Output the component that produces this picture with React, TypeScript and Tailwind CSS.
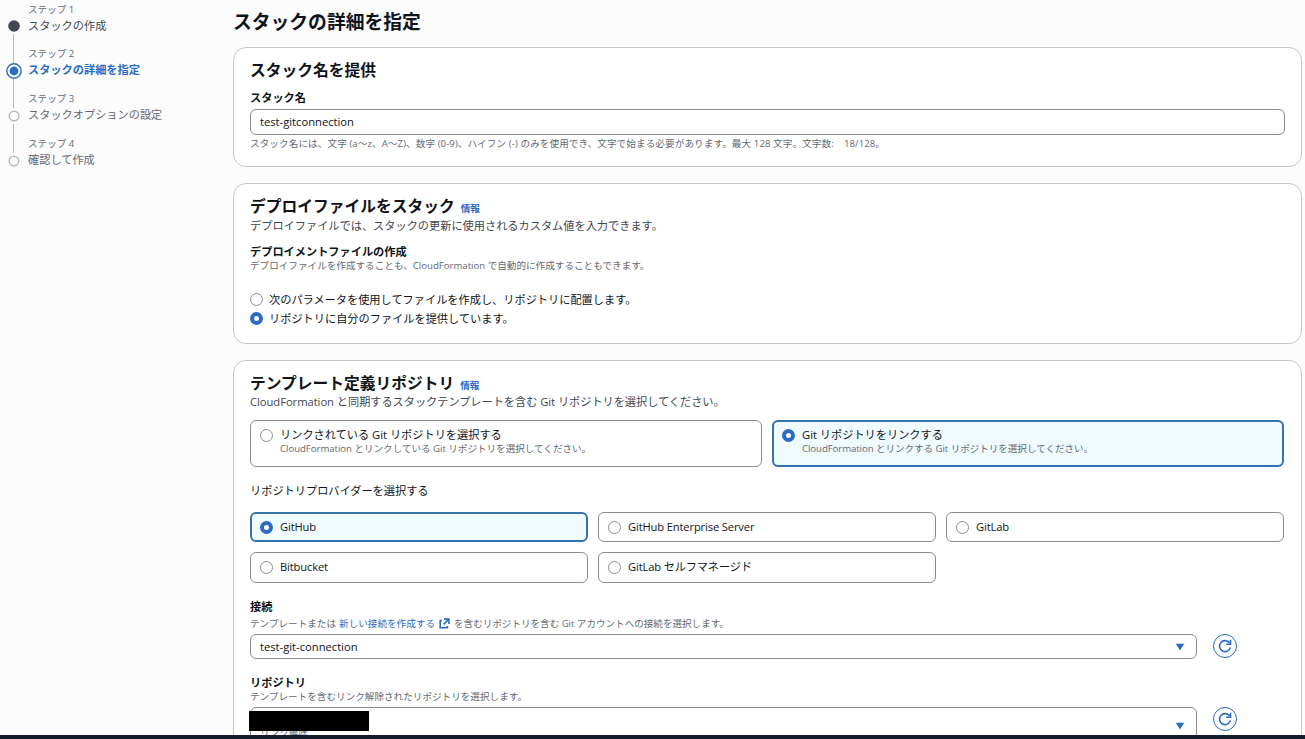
import { clsx } from 'clsx'

const STEPS = [
  { no: 'ステップ 1', title: 'スタックの作成', state: 'done' },
  { no: 'ステップ 2', title: 'スタックの詳細を指定', state: 'current' },
  { no: 'ステップ 3', title: 'スタックオプションの設定', state: 'todo' },
  { no: 'ステップ 4', title: '確認して作成', state: 'todo' },
]

const PROVIDERS = ['GitHub', 'GitHub Enterprise Server', 'GitLab', 'Bitbucket', 'GitLab セルフマネージド']

function StepMarker({ state }: { state: string }) {
  if (state === 'done') {
    return <circle cx="8" cy="8" r="5.8" fill="#424650" />
  }
  if (state === 'current') {
    return (
      <>
        <circle cx="8" cy="8" r="7.2" fill="#fff" stroke="#2a6cc4" strokeWidth="1.4" />
        <circle cx="8" cy="8" r="4.4" fill="#2a6cc4" />
      </>
    )
  }
  return <circle cx="8" cy="8" r="4.8" fill="#fff" stroke="#b6bac1" strokeWidth="1.5" />
}

function Steps() {
  return (
    <nav className="w-[233px] shrink-0 pl-1.5 pt-[3px]">
      {STEPS.map(({ no, title, state }, i) => (
        <div key={title} className="flex h-[45px] gap-1.5 first:h-[44px]">
          <div className={clsx('flex w-4 flex-col items-center', i === 0 ? 'pt-[15px]' : 'pt-4')}>
            <svg width="16" height="16" viewBox="0 0 16 16" className="shrink-0">
              <StepMarker state={state} />
            </svg>
            {i < STEPS.length - 1 && <div className="-mb-4 mr-px w-px flex-1 bg-[#b6bac1]" />}
          </div>
          <div className="whitespace-nowrap">
            <div className="text-[9.6px] leading-[14px] text-[#656871]">{no}</div>
            <div
              className={clsx(
                'mt-px text-[11.2px] leading-4',
                state === 'current' && 'font-bold text-[#2a6cc4]',
                state === 'done' && 'text-[#424650]',
                state === 'todo' && 'text-[#656871]',
              )}
            >
              {title}
            </div>
          </div>
        </div>
      ))}
    </nav>
  )
}

function Radio({ checked }: { checked?: boolean }) {
  return (
    <span
      className={clsx(
        'box-border h-[13px] w-[13px] shrink-0 rounded-full bg-white',
        checked ? 'border-4 border-[#2a6cc4]' : 'border border-[#8c8c94]',
      )}
    />
  )
}

function Heading({ children, info }: { children: string; info?: boolean }) {
  return (
    <h2 className="flex items-baseline gap-1.5 text-[15.75px] font-bold leading-5 text-[#0f141a]">
      {children}
      {info && <a className="text-[9.6px] leading-none text-[#2a6cc4]">情報</a>}
    </h2>
  )
}

function Label({ children }: { children: string }) {
  return <div className="text-[11.2px] font-bold leading-[14px] text-[#0f141a]">{children}</div>
}

function Caret() {
  return (
    <svg width="10" height="8" viewBox="0 0 10 8">
      <path d="M0.8 0.8h8.4L5 7.4z" fill="#2a6cc4" />
    </svg>
  )
}

function RefreshButton() {
  return (
    <button className="flex h-6 w-6 shrink-0 items-center justify-center rounded-full border border-[#2a6cc4] bg-white">
      <svg width="14" height="14" viewBox="0 0 14 14" fill="none" stroke="#2a6cc4" strokeWidth="1.6">
        <path d="M12.4 8.4A5.5 5.5 0 1 1 11.6 4" />
        <path d="M12.5 0.8v4.4H8.2" />
      </svg>
    </button>
  )
}

function ExternalIcon() {
  return (
    <svg width="11" height="11" viewBox="0 0 11 11" fill="none" stroke="#2a6cc4" strokeWidth="1.6">
      <path d="M3 2.6H1.2v7.2h7.2V8" />
      <path d="M5 1.1h4.9V6M9.7 1.3L4.6 6.4" />
    </svg>
  )
}

const CARD = 'rounded-[13px] border border-[#c6c6cd] bg-white px-4 pt-3'
const TILE = 'flex gap-[7px] rounded-md'
const TILE_ON = 'border-2 border-[#3573ad] bg-[#f0fbff] px-2'
const TILE_OFF = 'border border-[#8c8c94] bg-white px-[9px]'

export default function App() {
  return (
    <div className="flex h-[739px] w-[1305px] flex-col overflow-hidden bg-[#fcfcfd] font-['Open_Sans','Noto_Sans_CJK_JP',sans-serif] text-[11.2px] text-[#0f141a]">
      <div className="flex min-h-0 flex-1 overflow-hidden">
        <Steps />

        <main className="w-[1069px] shrink-0">
          <h1 className="h-[47px] pt-2.5 text-[18.8px] font-bold leading-6">スタックの詳細を指定</h1>

          {/* Stack name */}
          <section className={clsx(CARD, 'h-[120px]')}>
            <Heading>スタック名を提供</Heading>
            <div className="mt-[11px]">
              <Label>スタック名</Label>
            </div>
            <div className="mt-1 flex h-[26px] items-center rounded-md border border-[#8c8c94] px-[9px]">
              test-gitconnection
            </div>
            <p className="mt-0.5 whitespace-pre text-[9.6px] leading-[14px] tracking-[0.09px] text-[#656871]">
              {'スタック名には、文字 (a〜z、A〜Z)、数字 (0-9)、ハイフン (-) のみを使用でき、文字で始まる必要があります。最大 128 文字。文字数:\u2002  18/128。'}
            </p>
          </section>

          {/* Deployment file */}
          <section className={clsx(CARD, 'mt-4 h-[161px]')}>
            <Heading info>デプロイファイルをスタック</Heading>
            <p className="mt-0.5 leading-4 text-[#424650]">
              デプロイファイルでは、スタックの更新に使用されるカスタム値を入力できます。
            </p>
            <div className="mt-[11px]">
              <Label>デプロイメントファイルの作成</Label>
            </div>
            <p className="text-[9.6px] leading-[14px] text-[#656871]">
              デプロイファイルを作成することも、CloudFormation で自動的に作成することもできます。
            </p>
            <div className="mt-[17px]">
              <label className="flex h-[19px] items-center gap-1.5">
                <Radio />
                <span className="pt-0.5">次のパラメータを使用してファイルを作成し、リポジトリに配置します。</span>
              </label>
              <label className="flex h-[19px] items-center gap-1.5">
                <Radio checked />
                <span className="pt-0.5">リポジトリに自分のファイルを提供しています。</span>
              </label>
            </div>
          </section>

          {/* Template repository */}
          <section className={clsx(CARD, 'mt-4 h-[420px]')}>
            <Heading info>テンプレート定義リポジトリ</Heading>
            <p className="mt-px leading-4 tracking-[-0.03px] text-[#424650]">
              CloudFormation と同期するスタックテンプレートを含む Git リポジトリを選択してください。
            </p>

            <div className="mr-px mt-2.5 grid grid-cols-2 gap-2.5">
              <div className={clsx(TILE, TILE_OFF, 'h-[47px] pt-2')}>
                <Radio />
                <div>
                  <div className="-mt-0.5 leading-4">リンクされている Git リポジトリを選択する</div>
                  <div className="text-[9.6px] leading-3 tracking-[-0.03px] text-[#656871]">
                    CloudFormation とリンクしている Git リポジトリを選択してください。
                  </div>
                </div>
              </div>
              <div className={clsx(TILE, TILE_ON, 'h-[47px] pt-[7px]')}>
                <Radio checked />
                <div>
                  <div className="-mt-0.5 leading-4">Git リポジトリをリンクする</div>
                  <div className="text-[9.6px] leading-3 tracking-[-0.06px] text-[#656871]">
                    CloudFormation とリンクする Git リポジトリを選択してください。
                  </div>
                </div>
              </div>
            </div>

            <div className="mt-4 leading-4">リポジトリプロバイダーを選択する</div>
            <div className="mr-px mt-[13px] grid grid-cols-3 grid-rows-[30px_31px] gap-2.5 tracking-[-0.15px]">
              {PROVIDERS.map((name, i) => (
                <div key={name} className={clsx(TILE, 'items-center', i === 0 ? TILE_ON : TILE_OFF)}>
                  <Radio checked={i === 0} />
                  {name}
                </div>
              ))}
            </div>

            <div className="mt-[17px]">
              <Label>接続</Label>
            </div>
            <p className="mt-0.5 flex h-[15px] items-center text-[9.6px] leading-[15px] text-[#656871]">
              テンプレートまたは
              <a className="ml-[3px] mr-1 flex items-center gap-1 text-[#2a6cc4]">
                新しい接続を作成する
                <ExternalIcon />
              </a>
              <span className="tracking-[-0.03px]">を含むリポジトリを含む Git アカウントへの接続を選択します。</span>
            </p>
            <div className="mt-[3px] flex h-[25px] gap-4">
              <div className="flex w-[947px] items-center justify-between rounded-md border border-[#8c8c94] pl-[9px] pr-[11px]">
                <span className="pt-0.5">test-git-connection</span>
                <Caret />
              </div>
              <RefreshButton />
            </div>

            <div className="mt-[17px]">
              <Label>リポジトリ</Label>
            </div>
            <p className="text-[9.6px] leading-[14px] text-[#656871]">
              テンプレートを含むリンク解除されたリポジトリを選択します。
            </p>
            <div className="mt-[3px] flex gap-4">
              <div className="relative flex h-[38px] w-[947px] items-center justify-between rounded-md border border-[#8c8c94] pl-[9px] pr-[11px]">
                <span className="self-end pb-1 text-[9.6px] leading-[14px] text-[#656871]">リンク解除</span>
                <Caret />
                {/* Redacted repository name */}
                <span className="absolute -left-0.5 top-[3px] h-5 w-[120px] bg-black" />
              </div>
              <RefreshButton />
            </div>
          </section>
        </main>
      </div>

      <footer className="h-1 shrink-0 bg-[#161d2a]" />
    </div>
  )
}
